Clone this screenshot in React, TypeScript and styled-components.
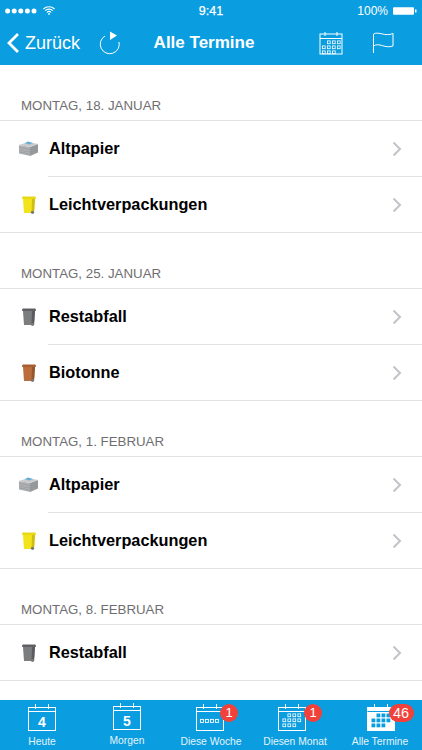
import React from "react";
import styled, { createGlobalStyle } from "styled-components";

const Global = createGlobalStyle`
  html, body {
    margin: 0;
    padding: 0;
    background: #fff;
    font-family: "Liberation Sans", Arial, sans-serif;
  }
`;

const Screen = styled.div`
  width: 422px;
  height: 750px;
  display: flex;
  flex-direction: column;
  overflow: hidden;
  background: #fff;
`;

const Header = styled.header`
  height: 65px;
  flex: none;
  background: #0a9ddf;
  color: #fff;
  display: flex;
  flex-direction: column;
`;

const StatusBar = styled.div`
  height: 21px;
  padding: 0 5px;
  display: flex;
  align-items: center;
  justify-content: space-between;
  font-size: 12px;
  position: relative;
`;

const StatusSide = styled.div<{ $gap: number }>`
  display: flex;
  align-items: center;
  gap: ${(p) => p.$gap}px;
`;

const Clock = styled.span`
  font-size: 12.5px;
  -webkit-text-stroke: 0.25px #fff;
  position: absolute;
  left: 0;
  right: 0;
  text-align: center;
`;

const NavBar = styled.div`
  height: 44px;
  display: grid;
  grid-template-columns: 146px 116px 160px;
  align-items: center;
`;

const NavLeft = styled.div`
  display: flex;
  align-items: center;
  padding-left: 6px;
`;

const Back = styled.span`
  font-size: 18px;
  margin-left: 5px;
  width: 74px;
`;

const NavTitle = styled.div`
  font-size: 17px;
  font-weight: 700;
  text-align: center;
  white-space: nowrap;
`;

const NavRight = styled.div`
  display: flex;
  align-items: center;
  padding-left: 57px;
  gap: 30px;
`;

const List = styled.main`
  flex: 1;
  min-height: 0;
  overflow: hidden;
`;

const DayTitle = styled.div`
  height: 55px;
  padding: 0 21px 7px;
  box-sizing: border-box;
  display: flex;
  align-items: flex-end;
  font-size: 13.3px;
  color: #6e6e70;
`;

const Group = styled.div`
  border-top: 1px solid #e2e2e4;
  border-bottom: 1px solid #e2e2e4;
`;

const Row = styled.div<{ $divided?: boolean }>`
  height: 55px;
  display: flex;
  align-items: center;
  padding-left: 18px;
  position: relative;
  ${(p) => (p.$divided ? "margin-top: 1px;" : "")}
  &::before {
    content: "";
    display: ${(p) => (p.$divided ? "block" : "none")};
    position: absolute;
    left: 48px;
    right: 0;
    top: -1px;
    height: 1px;
    background: #e2e2e4;
  }
`;

const IconSlot = styled.div`
  width: 21px;
  height: 24px;
  display: flex;
  align-items: center;
  justify-content: center;
`;

const RowText = styled.span`
  margin-left: 10px;
  font-size: 16.3px;
  font-weight: 700;
  color: #000;
  flex: 1;
`;

const Chevron = styled.svg`
  width: 10px;
  height: 16px;
  margin-right: 20px;
`;

const TabBar = styled.nav`
  height: 50px;
  flex: none;
  background: #0a9ddf;
  display: grid;
  grid-template-columns: 84px 86px 82px 86px 84px;
`;

const Tab = styled.div<{ $up?: boolean }>`
  position: relative;
  display: flex;
  flex-direction: column;
  align-items: center;
  color: #fff;
  padding-top: ${(p) => (p.$up ? "3px" : "4px")};
`;

const TabIcon = styled.div<{ $shift?: number }>`
  height: 27px;
  transform: translateX(${(p) => p.$shift ?? 0}px);
`;

const TabLabel = styled.span`
  font-size: 10.3px;
  line-height: 12px;
  margin-top: 5px;
  color: #e4f4fc;
  white-space: nowrap;
`;

const DayNumber = styled.text`
  font-family: "Liberation Sans", Arial, sans-serif;
  font-weight: 700;
  font-size: 14px;
  fill: #fff;
`;

const Badge = styled.span<{ $wide?: boolean }>`
  position: absolute;
  top: 4px;
  left: 50%;
  margin-left: ${(p) => (p.$wide ? "8.5px" : "9px")};
  min-width: ${(p) => (p.$wide ? "25px" : "18px")};
  height: 18px;
  border-radius: 9px;
  background: #f0413a;
  color: #fff;
  font-size: ${(p) => (p.$wide ? "14.4px" : "13px")};
  line-height: 18px;
  text-align: center;
`;

const CalendarGrid = ({ x, y, filled }: { x: number; y: number; filled?: boolean }) => {
  const cells: React.ReactNode[] = [];
  for (let r = 0; r < 3; r++) {
    for (let c = 0; c < 4; c++) {
      if ((r === 0 && c === 0) || (r === 2 && c === 3)) continue;
      cells.push(
        filled ? (
          <rect key={`${r}${c}`} x={x + c * 5} y={y + r * 5} width={3.8} height={3.8} fill="#0a9ddf" />
        ) : (
          <rect key={`${r}${c}`} x={x + c * 5 + 0.4} y={y + r * 5 + 0.4} width={2.8} height={2.8} fill="none" stroke="#fff" strokeWidth={0.8} />
        )
      );
    }
  }
  return <>{cells}</>;
};

const WeekRow = () => (
  <>
    {[0, 1, 2, 3].map((c) => (
      <rect key={c} x={4.4 + c * 5} y={15.4} width={3} height={3} fill="none" stroke="#fff" strokeWidth={0.9} />
    ))}
  </>
);

const TabCalendar = ({ day, week, grid, filled }: { day?: string; week?: boolean; grid?: boolean; filled?: boolean }) => (
  <svg width="28" height="27" viewBox="0 0 28 27">
    <rect x="0.5" y="3.5" width="27" height="23" fill={filled ? "#fff" : "none"} stroke="#fff" strokeWidth="1" />
    <path d="M0.5 7.5H27.5" stroke={filled ? "#0a9ddf" : "#fff"} strokeWidth="1" />
    <path d="M7.5 0V5M20.5 0V5" stroke="#fff" strokeWidth="1" />
    {day && (
      <DayNumber x="14" y="23" textAnchor="middle">
        {day}
      </DayNumber>
    )}
    {week && <WeekRow />}
    {grid && <CalendarGrid x={4.5} y={9.5} filled={filled} />}
  </svg>
);

// gray stack of paper
const PaperIcon = () => (
  <svg width="19" height="15" viewBox="0 0 19 15">
    <path d="M0 4L11 6V15L0 12.5Z" fill="#aeb0b3" />
    <path d="M11 6L19 3V11.5L11 15Z" fill="#96999c" />
    <path d="M0 4L9 1L19 3L11 6Z" fill="#c8cacc" />
    <path d="M6 2L9 0.5L14 2L10 3.6Z" fill="#5fb0dc" />
    <path d="M0 6.5L11 8.5M0 9L11 11M0 11L11 13" stroke="#8e9194" strokeWidth="0.5" />
  </svg>
);

const BinIcon = ({ main, dark, lid }: { main: string; dark: string; lid: string }) => (
  <svg width="14" height="18" viewBox="0 0 14 18">
    <path d="M1 3H13L12 17H2Z" fill={main} />
    <path d="M10 3H13L12 17H9.5Z" fill={dark} />
    <path d="M0.5 0.5H13.5L14 3H0Z" fill={lid} />
    <circle cx="10.5" cy="16.3" r="1.6" fill="#77787a" />
  </svg>
);

const trash = {
  Altpapier: <PaperIcon />,
  Leichtverpackungen: <BinIcon main="#f3e31b" dark="#d0bd12" lid="#e8d816" />,
  Restabfall: <BinIcon main="#7b7c7e" dark="#5a5b5e" lid="#5f6063" />,
  Biotonne: <BinIcon main="#bb6e3b" dark="#96552b" lid="#a85f32" />,
};

type TrashKind = keyof typeof trash;

const days: { title: string; items: TrashKind[] }[] = [
  { title: "MONTAG, 18. JANUAR", items: ["Altpapier", "Leichtverpackungen"] },
  { title: "MONTAG, 25. JANUAR", items: ["Restabfall", "Biotonne"] },
  { title: "MONTAG, 1. FEBRUAR", items: ["Altpapier", "Leichtverpackungen"] },
  { title: "MONTAG, 8. FEBRUAR", items: ["Restabfall"] },
];

export default function App() {
  return (
    <Screen>
      <Global />
      <Header>
        <StatusBar>
          <StatusSide $gap={6}>
            <svg width="32" height="10" viewBox="0 0 32 10">
              {[2.6, 9.2, 15.8, 22.4, 29].map((x) => (
                <circle key={x} cx={x} cy="5" r="2.5" fill="#fff" />
              ))}
            </svg>
            <svg width="12" height="9" viewBox="0 0 14 10.5">
              <path d="M0.5 3.5C4 0 10 0 13.5 3.5M2.5 5.5C5 3 9 3 11.5 5.5M4.5 7.5C6 6 8 6 9.5 7.5" stroke="#fff" strokeWidth="1.3" fill="none" />
              <circle cx="7" cy="9.2" r="1.1" fill="#fff" />
            </svg>
          </StatusSide>
          <Clock>9:41</Clock>
          <StatusSide $gap={5}>
            <span>100%</span>
            <svg width="24" height="10" viewBox="0 0 24 10">
              <rect x="0" y="1.2" width="21" height="7.6" rx="1" fill="#fff" />
              <rect x="22" y="3.5" width="1.5" height="3" fill="#fff" />
            </svg>
          </StatusSide>
        </StatusBar>
        <NavBar>
          <NavLeft>
            <svg width="14" height="22" viewBox="0 0 14 22">
              <path d="M12 2L3 11L12 20" stroke="#fff" strokeWidth="2.8" fill="none" />
            </svg>
            <Back>Zurück</Back>
            <svg width="22" height="24" viewBox="0 0 22 24">
              <path d="M6 5A9.5 9.5 0 1 0 20 11" stroke="#fff" strokeWidth="1" fill="none" />
              <path d="M11 0.5L18 4.5L11 9Z" fill="#fff" />
            </svg>
          </NavLeft>
          <NavTitle>Alle Termine</NavTitle>
          <NavRight>
            <svg width="24" height="24" viewBox="0 0 24 24">
              <rect x="1" y="3" width="22" height="20" fill="none" stroke="#fff" strokeWidth="1" />
              <path d="M1 7.5H23M6 1V5M18 1V5" stroke="#fff" strokeWidth="1" />
              <CalendarGrid x={3} y={9.5} />
            </svg>
            <svg width="21" height="24" viewBox="0 0 21 24">
              <path d="M0.5 22V3C6 0 12 6 20 2.5V15C12 18 6 11 0.5 15" stroke="#fff" strokeWidth="1" fill="none" />
            </svg>
          </NavRight>
        </NavBar>
      </Header>
      <List>
        {days.map((day) => (
          <div key={day.title}>
            <DayTitle>{day.title}</DayTitle>
            <Group>
              {day.items.map((item, i) => (
                <Row key={item} $divided={i > 0}>
                  <IconSlot>{trash[item]}</IconSlot>
                  <RowText>{item}</RowText>
                  <Chevron viewBox="0 0 10 16">
                    <path d="M1.5 1.5L8 8L1.5 14.5" stroke="#c4c4c8" strokeWidth="2" fill="none" />
                  </Chevron>
                </Row>
              ))}
            </Group>
          </div>
        ))}
      </List>
      <TabBar>
        <Tab>
          <TabIcon>
            <TabCalendar day="4" />
          </TabIcon>
          <TabLabel>Heute</TabLabel>
        </Tab>
        <Tab $up>
          <TabIcon>
            <TabCalendar day="5" />
          </TabIcon>
          <TabLabel>Morgen</TabLabel>
        </Tab>
        <Tab>
          <TabIcon $shift={-1}>
            <TabCalendar week />
          </TabIcon>
          <TabLabel>Diese Woche</TabLabel>
          <Badge>1</Badge>
        </Tab>
        <Tab>
          <TabIcon $shift={-3}>
            <TabCalendar grid />
          </TabIcon>
          <TabLabel>Diesen Monat</TabLabel>
          <Badge>1</Badge>
        </Tab>
        <Tab>
          <TabIcon $shift={1}>
            <TabCalendar grid filled />
          </TabIcon>
          <TabLabel>Alle Termine</TabLabel>
          <Badge $wide>46</Badge>
        </Tab>
      </TabBar>
    </Screen>
  );
}
